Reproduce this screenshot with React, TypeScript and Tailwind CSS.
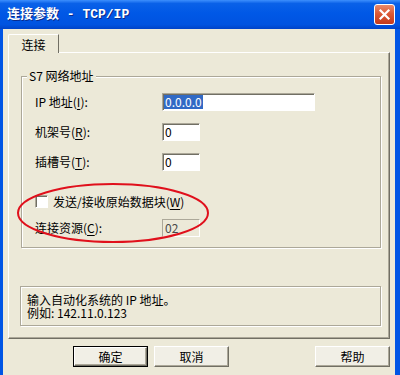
import React, { ReactNode } from "react";

const Key = ({ children }: { children: ReactNode }) => (
  <span className="underline underline-offset-[2px]">{children}</span>
);

const Field = ({
  label,
  children,
}: {
  label: ReactNode;
  children: ReactNode;
}) => (
  <div className="flex h-[18px] items-center">
    <span className="w-[127px]">{label}</span>
    {children}
  </div>
);

const sunken =
  "border border-t-[#aca899] border-l-[#aca899] border-r-white border-b-white shadow-[inset_1px_1px_0_#716f64]";

const Button = ({ label, main }: { label: string; main?: boolean }) => (
  <button
    className={
      "h-[21px] w-[75px] " + (main ? "border border-black" : "")
    }
  >
    <span className="flex h-full w-full items-center justify-center border border-t-white border-l-white border-r-[#716f64] border-b-[#716f64] bg-[#f1efe6] shadow-[inset_-1px_-1px_0_#aca899]">
      {label}
    </span>
  </button>
);

export default function App() {
  return (
    <div className="relative flex h-[375px] w-[400px] flex-col bg-[#0055e5] font-[family-name:'Noto_Sans_CJK_SC',sans-serif] text-[12px] leading-[14px] text-black">
      {/* title bar */}
      <div className="flex h-[29px] shrink-0 items-center bg-[linear-gradient(to_bottom,#3d8ffd_0%,#0a61e8_12%,#0058e6_45%,#0053e0_85%,#0043c8_100%)] pl-[7px] pr-[5px]">
        <span className="font-[family-name:'Liberation_Mono','Noto_Sans_CJK_SC',monospace] text-[13px] font-bold text-white [text-shadow:1px_1px_0_#0a2a8a]">
          连接参数 - TCP/IP
        </span>
        <button className="ml-auto flex h-[21px] w-[21px] items-center justify-center rounded-[3px] border border-white bg-[linear-gradient(to_bottom,#e98a6d_0%,#dc5a36_45%,#c4391a_100%)]">
          <svg width="13" height="13" viewBox="0 0 13 13">
            <path
              d="M2.5 2.5 L10.5 10.5 M10.5 2.5 L2.5 10.5"
              stroke="white"
              strokeWidth="2.2"
              strokeLinecap="square"
            />
          </svg>
        </button>
      </div>

      {/* body */}
      <div className="ml-[3px] mr-[5px] flex flex-1 flex-col bg-[#ece9d8]">
        <div className="pl-[5px] pt-[5px]">
          <div className="relative z-10 -mb-[1px] flex h-[19px] w-[51px] items-center justify-center rounded-tl-[2px] border-l border-t border-r border-l-white border-t-white border-r-[#716f64] bg-[#ece9d8] pt-[1px]">
            连接
          </div>
        </div>

        <div className="ml-[5px] h-[287px] w-[382px] border border-t-white border-l-white border-r-[#716f64] border-b-[#716f64] shadow-[inset_-1px_-1px_0_#aca899]">
          {/* group box */}
          <div className="relative ml-[12px] mt-[23px] h-[172px] w-[360px] border border-[#aca899] shadow-[inset_1px_1px_0_#fff,1px_1px_0_#fff] pl-[13px]">
            <span className="absolute -top-[8px] left-[5px] bg-[#ece9d8] px-[2px]">
              S7 网络地址
            </span>
            <div className="flex flex-col pt-[16px]">
              <Field
                label={
                  <>
                    IP 地址(<Key>I</Key>):
                  </>
                }
              >
                <div className={"flex h-[18px] w-[153px] items-center bg-white pl-[1px] " + sunken}>
                  <span className="bg-[#316ac5] px-[1px] leading-[14px] text-white">0.0.0.0</span>
                </div>
              </Field>
              <div className="mt-[12px]">
                <Field
                  label={
                    <>
                      机架号(<Key>R</Key>):
                    </>
                  }
                >
                  <div className={"flex h-[18px] w-[38px] items-center bg-white pl-[2px] " + sunken}>0</div>
                </Field>
              </div>
              <div className="mt-[12px]">
                <Field
                  label={
                    <>
                      插槽号(<Key>T</Key>):
                    </>
                  }
                >
                  <div className={"flex h-[18px] w-[38px] items-center bg-white pl-[2px] " + sunken}>0</div>
                </Field>
              </div>
              <div className="mt-[24px] flex h-[13px] items-center gap-[5px]">
                <span className={"h-[13px] w-[13px] bg-white " + sunken} />
                <span>
                  发送/接收原始数据块(<Key>W</Key>)
                </span>
              </div>
              <div className="mt-[11px]">
                <Field
                  label={
                    <>
                      连接资源(<Key>C</Key>):
                    </>
                  }
                >
                  <div className="flex h-[18px] w-[38px] items-center border border-t-[#aca899] border-l-[#aca899] border-r-white border-b-white pl-[2px] text-[#4a4a4a]">
                    02
                  </div>
                </Field>
              </div>
            </div>
          </div>

          {/* info box */}
          <div className="ml-[11px] mt-[38px] h-[40px] w-[361px] border border-[#aca899] pl-[6px] pt-[6px] leading-[13px] shadow-[inset_1px_1px_0_#fff,1px_1px_0_#fff]">
            <div>输入自动化系统的 IP 地址。</div>
            <div>例如: 142.11.0.123</div>
          </div>
        </div>

        {/* buttons */}
        <div className="mt-[7px] flex pl-[70px] pr-[5px]">
          <Button label="确定" main />
          <div className="ml-[6px]">
            <Button label="取消" />
          </div>
          <div className="ml-auto">
            <Button label="帮助" />
          </div>
        </div>
      </div>

      {/* red annotation ellipse */}
      <svg
        className="pointer-events-none absolute left-[16px] top-[182px]"
        width="194"
        height="62"
        viewBox="0 0 194 62"
      >
        <ellipse
          cx="97"
          cy="31"
          rx="95"
          ry="29"
          fill="none"
          stroke="#e0101c"
          strokeWidth="2"
        />
      </svg>
    </div>
  );
}
